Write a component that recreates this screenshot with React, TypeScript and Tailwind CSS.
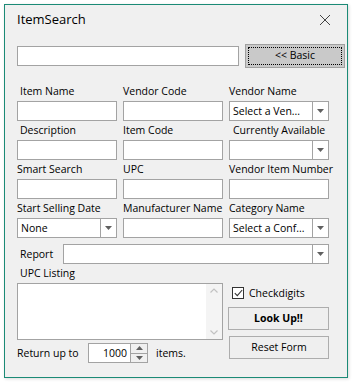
import React from "react"

const font = { fontFamily: "'Open Sans', 'Noto Sans', sans-serif" }

function Arrow() {
  return (
    <svg width="7" height="4" viewBox="0 0 7 4" className="block">
      <path d="M0 0h7L3.5 4z" fill="#606060" />
    </svg>
  )
}

function TextBox({ className = "" }: { className?: string }) {
  return <div className={`h-[20px] border border-[#a3a3a3] bg-white ${className}`} />
}

function Combo({ value = "", className = "" }: { value?: string; className?: string }) {
  return (
    <div className={`flex h-[20px] border border-[#a3a3a3] bg-white ${className}`}>
      <div className="flex-1 pl-[3px] text-[10.5px] leading-[18px] text-black whitespace-nowrap overflow-hidden">{value}</div>
      <div className="flex w-[16px] items-center justify-center border-l border-[#a3a3a3]">
        <Arrow />
      </div>
    </div>
  )
}

function Field({
  label,
  indent = 0,
  children,
}: {
  label: string
  indent?: number
  children: React.ReactNode
}) {
  return (
    <div className="w-[100px]">
      <div
        className={`h-[19px] text-[10.5px] leading-[19px] text-black whitespace-nowrap ${
          indent === 3 ? "pl-[3px]" : indent === 4 ? "pl-[4px]" : ""
        }`}
      >
        {label}
      </div>
      {children}
    </div>
  )
}

export default function App() {
  return (
    <div className="w-[354px] h-[383px] bg-white pl-[4px] pt-[4px]" style={font}>
      <div className="flex w-[344px] h-[374px] flex-col border border-[#1b8a76] bg-[#f0f0f0] shadow-[1px_1px_3px_rgba(0,0,0,0.15)]">
        {/* Title bar */}
        <div className="flex h-[30px] items-center justify-between pl-[12px] pr-[17px]">
          <span className="text-[13px] text-black">ItemSearch</span>
          <svg width="10" height="10" viewBox="0 0 10 10">
            <path d="M0 0L10 10M10 0L0 10" stroke="#444" strokeWidth="1" />
          </svg>
        </div>

        <div className="pl-[12px]">
          {/* Search row */}
          <div className="mt-[9px] flex items-center gap-[6px]">
            <TextBox className="w-[222px]" />
            <div className="flex h-[24px] w-[100px] items-center justify-center border border-[#a0a0a0] bg-[#c9c9c9] p-[2px]">
              <div className="flex h-full w-full items-center justify-center border border-dotted border-black text-[10.5px] text-black">
                &lt;&lt; Basic
              </div>
            </div>
          </div>

          {/* Field grid */}
          <div className="mt-[14px] flex flex-col">
            <div className="flex gap-[6px]">
              <Field label="Item Name" indent={3}><TextBox /></Field>
              <Field label="Vendor Code"><TextBox /></Field>
              <Field label="Vendor Name"><Combo value="Select a Ven..." /></Field>
            </div>
            <div className="flex gap-[6px]">
              <Field label="Description" indent={3}><TextBox /></Field>
              <Field label="Item Code"><TextBox /></Field>
              <Field label="Currently Available" indent={4}><Combo /></Field>
            </div>
            <div className="flex gap-[6px]">
              <Field label="Smart Search"><TextBox /></Field>
              <Field label="UPC"><TextBox /></Field>
              <Field label="Vendor Item Number"><TextBox /></Field>
            </div>
            <div className="flex gap-[6px]">
              <Field label="Start Selling Date"><Combo value="None" /></Field>
              <Field label="Manufacturer Name"><TextBox /></Field>
              <Field label="Category Name"><Combo value="Select a Conf..." /></Field>
            </div>
          </div>

          {/* Report row */}
          <div className="mt-[6px] flex h-[20px] items-center">
            <span className="w-[46px] pl-[3px] text-[10.5px] leading-[20px] text-black">Report</span>
            <Combo className="w-[266px]" />
          </div>

          {/* Bottom section */}
          <div className="flex gap-[6px]">
            <div className="w-[206px]">
              <div className="h-[19px] pl-[3px] text-[10.5px] leading-[19px] text-black">UPC Listing</div>
              <div className="flex h-[57px] border border-[#a3a3a3] bg-white">
                <div className="flex-1" />
                <div className="flex w-[16px] flex-col items-center justify-between bg-[#f4f4f4] py-[4px]">
                  <svg width="8" height="5" viewBox="0 0 8 5">
                    <path d="M0.5 4.5L4 1l3.5 3.5" fill="none" stroke="#c2c2c2" strokeWidth="1.2" />
                  </svg>
                  <svg width="8" height="5" viewBox="0 0 8 5">
                    <path d="M0.5 0.5L4 4l3.5-3.5" fill="none" stroke="#c2c2c2" strokeWidth="1.2" />
                  </svg>
                </div>
              </div>
              <div className="mt-[3px] flex h-[20px] items-center">
                <span className="w-[71px] text-[10.5px] leading-[20px] text-black">Return up to</span>
                <div className="flex h-[20px] w-[60px] border border-[#a3a3a3] bg-white">
                  <div className="flex-1 pr-[3px] text-right text-[10.5px] leading-[18px] text-black">1000</div>
                  <div className="flex w-[17px] flex-col border-l border-[#a3a3a3] bg-[#f0f0f0]">
                    <div className="flex flex-1 items-center justify-center border-b border-[#a3a3a3]">
                      <svg width="7" height="4" viewBox="0 0 7 4"><path d="M0 4h7L3.5 0z" fill="#606060" /></svg>
                    </div>
                    <div className="flex flex-1 items-center justify-center">
                      <Arrow />
                    </div>
                  </div>
                </div>
                <span className="ml-[8px] text-[10.5px] leading-[20px] text-black">items.</span>
              </div>
            </div>

            <div className="flex w-[100px] flex-col pt-[22px]">
              <div className="flex h-[14px] items-center pl-[3px]">
                <div className="flex h-[12px] w-[12px] items-center justify-center border border-[#333] bg-white">
                  <svg width="9" height="8" viewBox="0 0 9 8">
                    <path d="M0.8 4.2L3.3 6.6L8.2 1" fill="none" stroke="#333" strokeWidth="1.1" />
                  </svg>
                </div>
                <span className="ml-[5px] text-[10.5px] leading-[14px] text-black">Checkdigits</span>
              </div>
              <div className="-ml-[1px] mt-[7px] flex h-[23px] items-center justify-center border border-[#adadad] bg-[#efefef] text-[10.5px] font-bold text-black">
                Look Up!!
              </div>
              <div className="mt-[6px] flex h-[23px] items-center justify-center border border-[#adadad] bg-[#efefef] text-[10.5px] text-black">
                Reset Form
              </div>
            </div>
          </div>
        </div>
      </div>
    </div>
  )
}
